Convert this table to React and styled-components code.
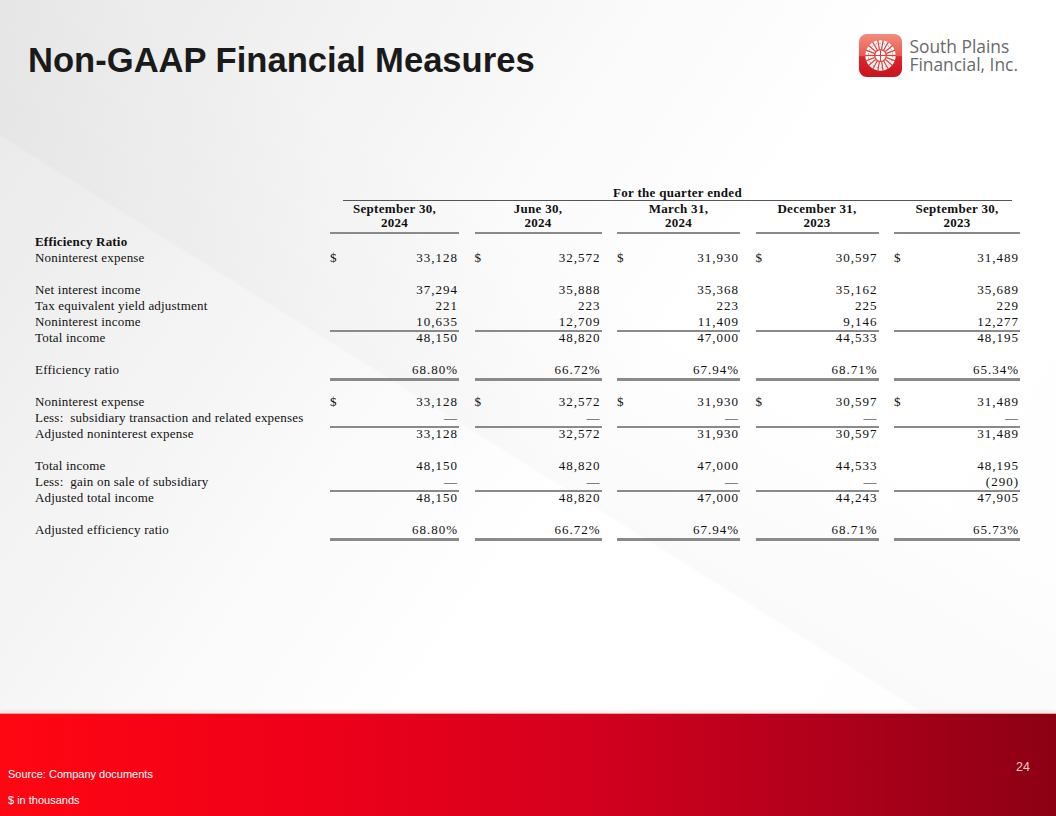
import React from 'react'
import styled, { createGlobalStyle } from 'styled-components'

const GlobalStyle = createGlobalStyle`
  html, body {
    margin: 0;
    padding: 0;
  }
  body {
    font-family: 'Liberation Sans', Arial, sans-serif;
  }
`

const Page = styled.div`
  width: 1056px;
  height: 816px;
  display: flex;
  flex-direction: column;
  overflow: hidden;
  background:
    linear-gradient(32deg, rgba(0, 0, 0, 0) 46%, rgba(0, 0, 0, 0.02) 46.2%, rgba(0, 0, 0, 0) 62%),
    linear-gradient(125deg, #e8e8e8 0%, #f2f2f2 22%, #fafafa 40%, #ffffff 56%, #fefefe 100%);
`

const Header = styled.header`
  display: flex;
  justify-content: space-between;
  align-items: flex-start;
  padding: 34px 38px 0 28px;
`

const Title = styled.h1`
  margin: 9px 0 0;
  font-family: 'Liberation Sans', Arial, sans-serif;
  font-weight: 700;
  font-size: 34.6px;
  line-height: 1;
  color: #1a1a1a;
`

const Brand = styled.div`
  display: flex;
  align-items: center;
  gap: 7px;
`

const BrandName = styled.div`
  display: flex;
  flex-direction: column;
  font-family: 'Open Sans', 'Noto Sans', sans-serif;
  font-size: 17.4px;
  line-height: 18px;
  color: #6a6a6a;
  margin-top: -1px;
`

const Main = styled.main`
  flex: 1;
  padding: 108px 0 0 35px;
`

const Table = styled.div`
  display: grid;
  grid-template-columns: 279.5px 129px 127px 123px 123px 126px;
  column-gap: 15.5px;
  font-family: 'Liberation Serif', 'Times New Roman', serif;
  color: #111;
`

const PeriodTitle = styled.div`
  grid-column: 2 / -1;
  margin: 0 8px 0 13px;
  height: 14px;
  line-height: 14px;
  text-align: center;
  font-weight: 700;
  font-size: 13px;
  letter-spacing: 0.3px;
  border-bottom: 1px solid #555;
`

const ColHead = styled.div`
  padding: 1px 0 2px;
  line-height: 14px;
  text-align: center;
  font-weight: 700;
  font-size: 13px;
  letter-spacing: 0.3px;
  border-bottom: 2px solid #8a8a8a;
`

const Label = styled.div`
  height: 16px;
  line-height: 16px;
  font-size: 13px;
  letter-spacing: 0.2px;
  white-space: pre;
  font-weight: ${(props) => (props.$bold ? 700 : 400)};
`

const Amount = styled.div`
  height: 16px;
  line-height: 16px;
  display: flex;
  justify-content: space-between;
  padding-right: 1px;
  font-size: 13px;
  letter-spacing: 1px;
  box-shadow: ${({ $rule }) =>
    $rule === 'double' ? '0 3px 0 #8a8a8a' : $rule === 'single' ? '0 2px 0 #8a8a8a' : 'none'};
`

const Blank = styled.div`
  grid-column: 1 / -1;
  height: 16px;
`

const Footer = styled.footer`
  height: 102px;
  display: flex;
  justify-content: space-between;
  align-items: flex-start;
  padding: 0 26px 0 8px;
  background: linear-gradient(90deg, #ff0612 0%, #ee0019 30%, #d4001e 55%, #b0001b 78%, #8c0014 100%);
  box-shadow: 0 -2px 3px rgba(0, 0, 0, 0.08);
  border-top: 1px solid #f5a0a0;
`

const Notes = styled.div`
  display: flex;
  flex-direction: column;
  gap: 12px;
  margin-top: 53px;
  font-size: 11px;
  line-height: 14px;
  color: #fff;
`

const PageNum = styled.div`
  margin-top: 45px;
  font-size: 12.5px;
  line-height: 16px;
  color: #f2cccc;
`

const Logo = () => {
  const spokes = Array.from({ length: 18 }, (_, i) => (i * Math.PI * 2) / 18)
  return (
    <svg width="43" height="43" viewBox="0 0 44 44">
      <defs>
        <linearGradient id="logoBg" x1="0" y1="0" x2="0" y2="1">
          <stop offset="0" stopColor="#f48c7d" />
          <stop offset="0.5" stopColor="#ea5b50" />
          <stop offset="0.53" stopColor="#dc2630" />
          <stop offset="1" stopColor="#c8141f" />
        </linearGradient>
      </defs>
      <rect x="0" y="0" width="44" height="44" rx="8" fill="url(#logoBg)" />
      <circle cx="22" cy="22" r="15.5" fill="#fff" />
      {spokes.map((a, i) => (
        <line
          key={i}
          x1={22 + Math.cos(a) * 6.5}
          y1={22 + Math.sin(a) * 6.5}
          x2={22 + Math.cos(a) * 16}
          y2={22 + Math.sin(a) * 16}
          stroke="#e0403a"
          strokeWidth="1.3"
        />
      ))}
      <circle cx="22" cy="22" r="12.5" fill="none" stroke="#e0403a" strokeWidth="0.6" strokeDasharray="2 2.4" />
      <circle cx="22" cy="22" r="6" fill="#fff" stroke="#e0403a" strokeWidth="1.4" />
      <line x1="16.5" y1="22" x2="27.5" y2="22" stroke="#e0403a" strokeWidth="1.1" />
      <line x1="22" y1="16.5" x2="22" y2="27.5" stroke="#e0403a" strokeWidth="1.1" />
    </svg>
  )
}

const periods = [
  ['September 30,', '2024'],
  ['June 30,', '2024'],
  ['March 31,', '2024'],
  ['December 31,', '2023'],
  ['September 30,', '2023'],
]

const expense = ['33,128', '32,572', '31,930', '30,597', '31,489']
const totalIncome = ['48,150', '48,820', '47,000', '44,533', '48,195']
const dashes = ['—', '—', '—', '—', '—']

const rows = [
  { label: 'Efficiency Ratio', bold: true },
  { label: 'Noninterest expense', dollar: true, values: expense },
  null,
  { label: 'Net interest income', values: ['37,294', '35,888', '35,368', '35,162', '35,689'] },
  { label: 'Tax equivalent yield adjustment', values: ['221', '223', '223', '225', '229'] },
  { label: 'Noninterest income', values: ['10,635', '12,709', '11,409', '9,146', '12,277'], rule: 'single' },
  { label: 'Total income', values: totalIncome },
  null,
  { label: 'Efficiency ratio', values: ['68.80%', '66.72%', '67.94%', '68.71%', '65.34%'], rule: 'double' },
  null,
  { label: 'Noninterest expense', dollar: true, values: expense },
  { label: 'Less:  subsidiary transaction and related expenses', values: dashes, rule: 'single' },
  { label: 'Adjusted noninterest expense', values: expense },
  null,
  { label: 'Total income', values: totalIncome },
  { label: 'Less:  gain on sale of subsidiary', values: ['—', '—', '—', '—', '(290)'], rule: 'single' },
  { label: 'Adjusted total income', values: ['48,150', '48,820', '47,000', '44,243', '47,905'] },
  null,
  { label: 'Adjusted efficiency ratio', values: ['68.80%', '66.72%', '67.94%', '68.71%', '65.73%'], rule: 'double' },
]

const App = () => {
  return (
    <>
      <GlobalStyle />
      <Page>
        <Header>
          <Title>Non-GAAP Financial Measures</Title>
          <Brand>
            <Logo />
            <BrandName>
              <span>South Plains</span>
              <span>Financial, Inc.</span>
            </BrandName>
          </Brand>
        </Header>

        <Main>
          <Table>
            <div />
            <PeriodTitle>For the quarter ended</PeriodTitle>
            <div />
            {periods.map(([month, year], i) => (
              <ColHead key={i}>
                {month}
                <br />
                {year}
              </ColHead>
            ))}
            {rows.map((row, r) =>
              row === null ? (
                <Blank key={r} />
              ) : (
                <React.Fragment key={r}>
                  <Label $bold={row.bold}>{row.label}</Label>
                  {(row.values || ['', '', '', '', '']).map((v, c) => (
                    <Amount key={c} $rule={row.rule}>
                      <span>{row.dollar ? '$' : ''}</span>
                      <span>{v}</span>
                    </Amount>
                  ))}
                </React.Fragment>
              )
            )}
          </Table>
        </Main>

        <Footer>
          <Notes>
            <span>Source: Company documents</span>
            <span>$ in thousands</span>
          </Notes>
          <PageNum>24</PageNum>
        </Footer>
      </Page>
    </>
  )
}

export default App
